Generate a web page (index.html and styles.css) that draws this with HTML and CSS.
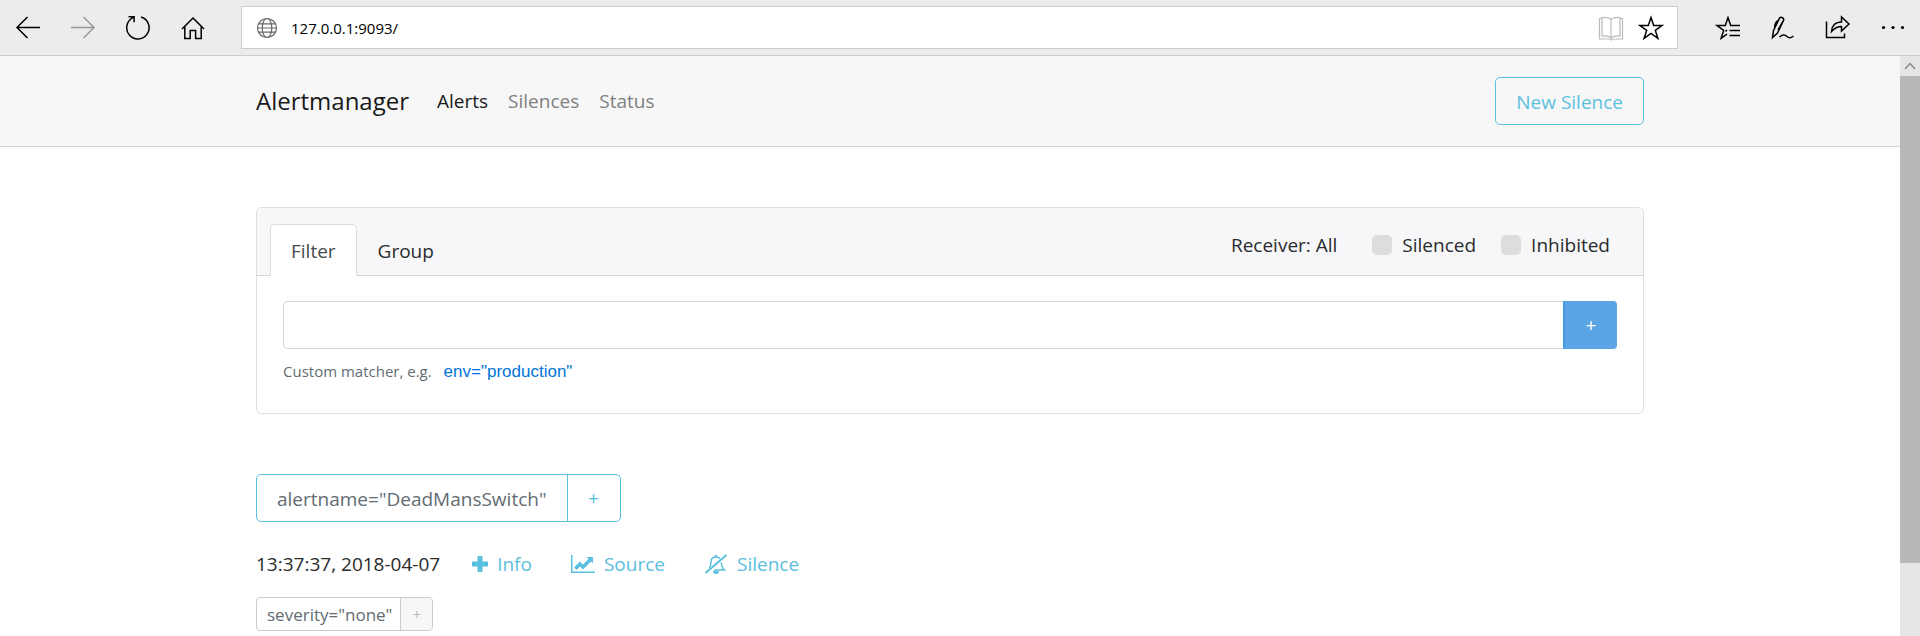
FILE: index.html
```html
<!DOCTYPE html>
<html lang="en">
<head>
<meta charset="utf-8">
<title>Alertmanager</title>
<link rel="stylesheet" href="styles.css">
</head>
<body>
<div class="toolbar">
  <button class="tool" type="button" aria-label="Back"><svg width="26" height="26" viewBox="0 0 26 26"><path d="M25 12.500H2M12.500 2L2 12.500 12.500 23"/></svg></button>
  <button class="tool tool-off" type="button" aria-label="Forward"><svg width="26" height="26" viewBox="0 0 26 26"><path d="M1 12.500h23M13.500 2L24 12.500 13.500 23"/></svg></button>
  <button class="tool" type="button" aria-label="Refresh"><svg width="26" height="26" viewBox="0 0 26 26"><path d="M16 2A11.200 11.200 0 1 1 8 2.700M3.500 1.700h5.600v5.600"/></svg></button>
  <button class="tool" type="button" aria-label="Home"><svg width="26" height="26" viewBox="0 0 26 26"><path d="M2 14L13 3l11 11M4.800 11.500V23.500h5.400v-8h5.400v8h5.600V11.500"/></svg></button>
  <div class="address">
    <svg class="globe" width="22" height="22" viewBox="0 0 22 22"><circle cx="11" cy="11" r="9.500"/><ellipse cx="11" cy="11" rx="4.800" ry="9.500"/><path d="M3 6.800h16M1.500 11h19M3 15.200h16"/></svg>
    <input class="url" type="text" value="127.0.0.1:9093/" aria-label="Address">
    <button class="inner book" type="button" aria-label="Reading view"><svg width="26" height="26" viewBox="0 0 26 26"><path d="M4 3.500H1.500v20.500h10l1.500 1 1.500-1h10V3.500H22M13 4.500c-2-2-5-2.200-9-2v18.500c4-.2 7 0 9 2 2-2 5-2.200 9-2V2.500c-4-.2-7 0-9 2zM13 4.500V23"/></svg></button>
    <button class="inner" type="button" aria-label="Add to favorites"><svg width="26" height="26" viewBox="0 0 26 26"><path d="M13 2.500l2.700 8h8.300l-6.700 4.900 2.600 8-6.900-4.900-6.900 4.900 2.600-8L2 10.500h8.300z"/></svg></button>
  </div>
  <button class="tool" type="button" aria-label="Favorites"><svg width="26" height="26" viewBox="0 0 26 26"><path d="M17 10.500h-1.300L13 2.500l-2.700 8H2l6.700 4.900-2.600 8 5.900-4.300M12 15l-1.500 1.500M15.500 10.500H25M14.500 15.500H25M14.500 20.500H25"/></svg></button>
  <button class="tool" type="button" aria-label="Notes"><svg width="26" height="26" viewBox="0 0 26 26"><path d="M2.500 22.500l1-7L9.500 3.200c1.500-2 5 0 4 2.300L7.500 18l-5 4.500zM9 5c-3 1-4 4-4.500 7M13 6l-5 9M9.500 22c3-3 5.500-2.500 7.500-.5s4 1.500 6.500-.5"/></svg></button>
  <button class="tool" type="button" aria-label="Share"><svg width="26" height="26" viewBox="0 0 26 26"><path d="M1.500 6.500V22.500H19.500v-4M6.500 16.500c.5-6.500 4-9.500 10-9.500V2l7.500 7-7.500 7v-4.500c-4.500 0-7 1.500-10 5z"/></svg></button>
  <button class="tool tool-more" type="button" aria-label="More"><svg width="26" height="26" viewBox="0 0 26 26"><circle cx="3.500" cy="12.500" r="1.600"/><circle cx="13" cy="12.500" r="1.600"/><circle cx="22.500" cy="12.500" r="1.600"/></svg></button>
</div>

<div class="window">
  <div class="page">
    <header class="header">
      <nav class="container nav">
        <a class="brand" href="#">Alertmanager</a>
        <a class="nav-link active" href="#">Alerts</a>
        <a class="nav-link" href="#">Silences</a>
        <a class="nav-link" href="#">Status</a>
        <a class="btn new-silence" href="#">New Silence</a>
      </nav>
    </header>

    <main class="container">
      <section class="card">
        <div class="card-header">
          <div class="tabs">
            <a class="tab tab-active" href="#">Filter</a>
            <a class="tab" href="#">Group</a>
          </div>
          <div class="options">
            <span class="receiver">Receiver: All</span>
            <label class="check"><input type="checkbox">Silenced</label>
            <label class="check"><input type="checkbox">Inhibited</label>
          </div>
        </div>
        <div class="card-body">
          <div class="matcher">
            <input class="matcher-input" type="text" aria-label="Matcher">
            <button class="matcher-add" type="button">+</button>
          </div>
          <div class="help">Custom matcher, e.g. <button class="example" type="button">env="production"</button></div>
        </div>
      </section>

      <div class="group">
        <span class="group-label">alertname="DeadMansSwitch"</span>
        <button class="group-add" type="button">+</button>
      </div>

      <div class="alert">
        <span>13:37:37, 2018-04-07</span>
        <button class="action action-info" type="button"><svg width="16" height="16" viewBox="0 0 16 16"><path d="M6 0h4q.5 0 .5.500v5h5q.5 0 .5.500v4q0 .5-.5.500h-5v5q0 .5-.5.500H6q-.5 0-.5-.5v-5h-5Q0 10.500 0 10V6q0-.5.500-.5h5v-5Q5.500 0 6 0z"/></svg>Info</button>
        <a class="action" href="#"><svg width="24" height="20" viewBox="0 0 24 20"><path d="M0 1h1.500v16.500H24V19H0zM3 13.500l6-6 3 3L17.500 5l-2-2H22v6.500l-2-2-8 8-3-3-3.500 3.500z"/></svg>Source</a>
        <a class="action" href="#"><svg width="24" height="20" viewBox="0 0 24 20"><path class="line" d="M5.500 14c1.500-2.500 1.500-4 1.500-6 0-3 2-5 5-5 1.800 0 3 .6 4 1.600M17.300 8.500c.2 4 1.200 6 3.200 7.500H10"/><path class="slash" d="M1.500 19L22.500 1"/><path d="M9 17h6c0 1.700-1.200 3-3 3s-3-1.300-3-3zM11 1h2v2h-2z"/></svg>Silence</a>
      </div>

      <div class="label">
        <span class="label-text">severity="none"</span>
        <button class="label-add" type="button">+</button>
      </div>
    </main>
  </div>
  <div class="scrollbar">
    <div class="scroll-up"><svg width="12" height="8" viewBox="0 0 12 8"><path d="M1 7l5-5.500L11 7"/></svg></div>
    <div class="scroll-track"><div class="scroll-thumb"></div></div>
  </div>
</div>
</body>
</html>
```
FILE: styles.css
```css
* { box-sizing: border-box; }

body {
  margin: 0;
  min-height: 100vh;
  display: flex;
  flex-direction: column;
  background: #fff;
  color: #292b2c;
  font: 19px/30px "Open Sans", "Noto Sans", sans-serif;
}

a { color: inherit; text-decoration: none; }
button, input { font: inherit; color: inherit; }
button { cursor: pointer; }

/* Browser toolbar */
.toolbar {
  display: flex;
  align-items: center;
  height: 56px;
  background: #ebecec;
  border-bottom: 1px solid #ccc;
}
.tool, .inner {
  display: flex;
  align-items: center;
  justify-content: center;
  padding: 0;
  border: 0;
  background: none;
}
.tool { width: 55px; height: 54px; }
.toolbar svg { fill: none; stroke: #000; stroke-width: 1.5; }
.toolbar .tool-off svg { stroke: #999; }
.toolbar .tool-more svg { fill: #000; stroke: none; }
.address {
  flex: 1;
  display: flex;
  align-items: center;
  height: 43px;
  margin: 0 22px 0 21px;
  padding: 0 13px 0 14px;
  background: #fff;
  border: 1px solid #ccc;
}
.toolbar .globe { stroke: #666; stroke-width: 1.2; }
.url {
  flex: 1;
  min-width: 0;
  margin-left: 13px;
  padding: 0;
  border: 0;
  outline: 0;
  color: #000;
  font-size: 15px;
}
.inner { width: 26px; height: 40px; margin-left: 14px; }
.toolbar .book svg { stroke: #bbb; stroke-width: 1.2; }

/* Page and scrollbar */
.window { flex: 1; display: flex; }
.page { flex: 1; min-width: 0; }
.container { max-width: 1388px; margin: 0 auto; }
.scrollbar {
  width: 20px;
  display: flex;
  flex-direction: column;
  background: #e5e5e5;
}
.scroll-up {
  display: flex;
  align-items: center;
  justify-content: center;
  height: 20px;
}
.scroll-up svg { fill: none; stroke: #888; stroke-width: 1.5; }
.scroll-track { flex: 1; display: flex; flex-direction: column; }
.scroll-thumb { flex: 0 0 87%; background: #b8b8b8; }

/* Header */
.header {
  padding: 21px 0;
  background: #f7f7f7;
  border-bottom: 1px solid #d3d3d3;
}
.nav { display: flex; align-items: center; gap: 20px; }
.brand { margin-right: 8px; color: #1a1a1a; font-size: 24px; }
.nav-link { color: #808080; }
.nav-link.active { color: #1a1a1a; }
.btn {
  padding: 9px 20px 7px;
  border: 1px solid #5bc0de;
  border-radius: 5px;
  color: #5bc0de;
}
.new-silence { margin-left: auto; }

/* Filter card */
.card {
  margin-top: 60px;
  border: 1px solid #dfdfdf;
  border-radius: 5px;
}
.card-header {
  display: flex;
  justify-content: space-between;
  padding: 16px 33px 0 13px;
  background: #f7f7f9;
  border-bottom: 1px solid #d6d6d6;
  border-radius: 4px 4px 0 0;
}
.tabs { display: flex; margin-bottom: -1px; }
.tab {
  padding: 11px 20px 9px;
  border: 1px solid transparent;
  border-radius: 5px 5px 0 0;
}
.tab-active {
  background: #fff;
  border-color: #ddd;
  border-bottom-color: #fff;
  color: #464a4c;
}
.options { display: flex; align-items: flex-start; padding-top: 6px; }
.receiver { margin-right: 10px; }
.check { display: flex; align-items: center; gap: 10px; margin-left: 25px; }
.check input {
  appearance: none;
  width: 20px;
  height: 20px;
  margin: 0;
  border-radius: 5px;
  background: #ddd;
}
.card-body { padding: 25px 26px 26px; }
.matcher { display: flex; height: 48px; }
.matcher-input {
  flex: 1;
  min-width: 0;
  padding: 0 15px;
  border: 1px solid #d6d6d6;
  border-right: 0;
  border-radius: 5px 0 0 5px;
  outline: 0;
}
.matcher-add {
  width: 54px;
  padding: 0;
  border: 0;
  border-left: 2px solid #4a98dd;
  border-radius: 0 4px 4px 0;
  background: #5ba4e5;
  color: #fff;
}
.help { padding-top: 7px; color: #636c72; font-size: 15px; }
.example {
  margin-left: 8px;
  padding: 0;
  border: 0;
  background: none;
  color: #0275d8;
  font: 17px/30px "Liberation Sans", Arial, sans-serif;
}

/* Alert group */
.group {
  display: flex;
  width: max-content;
  margin-top: 60px;
  border: 1px solid #5bc0de;
  border-radius: 5px;
}
.group-label { padding: 9px 20px 7px; color: #636c72; }
.group-add {
  width: 53px;
  padding: 0;
  border: 0;
  border-left: 1px solid #5bc0de;
  background: none;
  color: #5bc0de;
}
.alert { display: flex; align-items: center; margin-top: 27px; }
.action {
  display: inline-flex;
  align-items: center;
  gap: 9px;
  margin-left: 39px;
  padding: 0;
  border: 0;
  background: none;
  color: #5bc0de;
}
.action-info { margin-left: 32px; }
.action svg { fill: #5bc0de; }
.action .line { fill: none; stroke: #5bc0de; stroke-width: 1.5; }
.action .slash { stroke: #5bc0de; stroke-width: 2; }

.label {
  display: flex;
  width: max-content;
  margin-top: 18px;
  border: 1px solid #ccc;
  border-radius: 4px;
}
.label-text { padding: 2px 8px 0 10px; color: #636c72; font-size: 17px; }
.label-add {
  width: 32px;
  padding: 0;
  border: 0;
  border-left: 1px solid #ccc;
  border-radius: 0 3px 3px 0;
  background: #f7f7f7;
  color: #bbb;
  font-size: 15px;
}
```
